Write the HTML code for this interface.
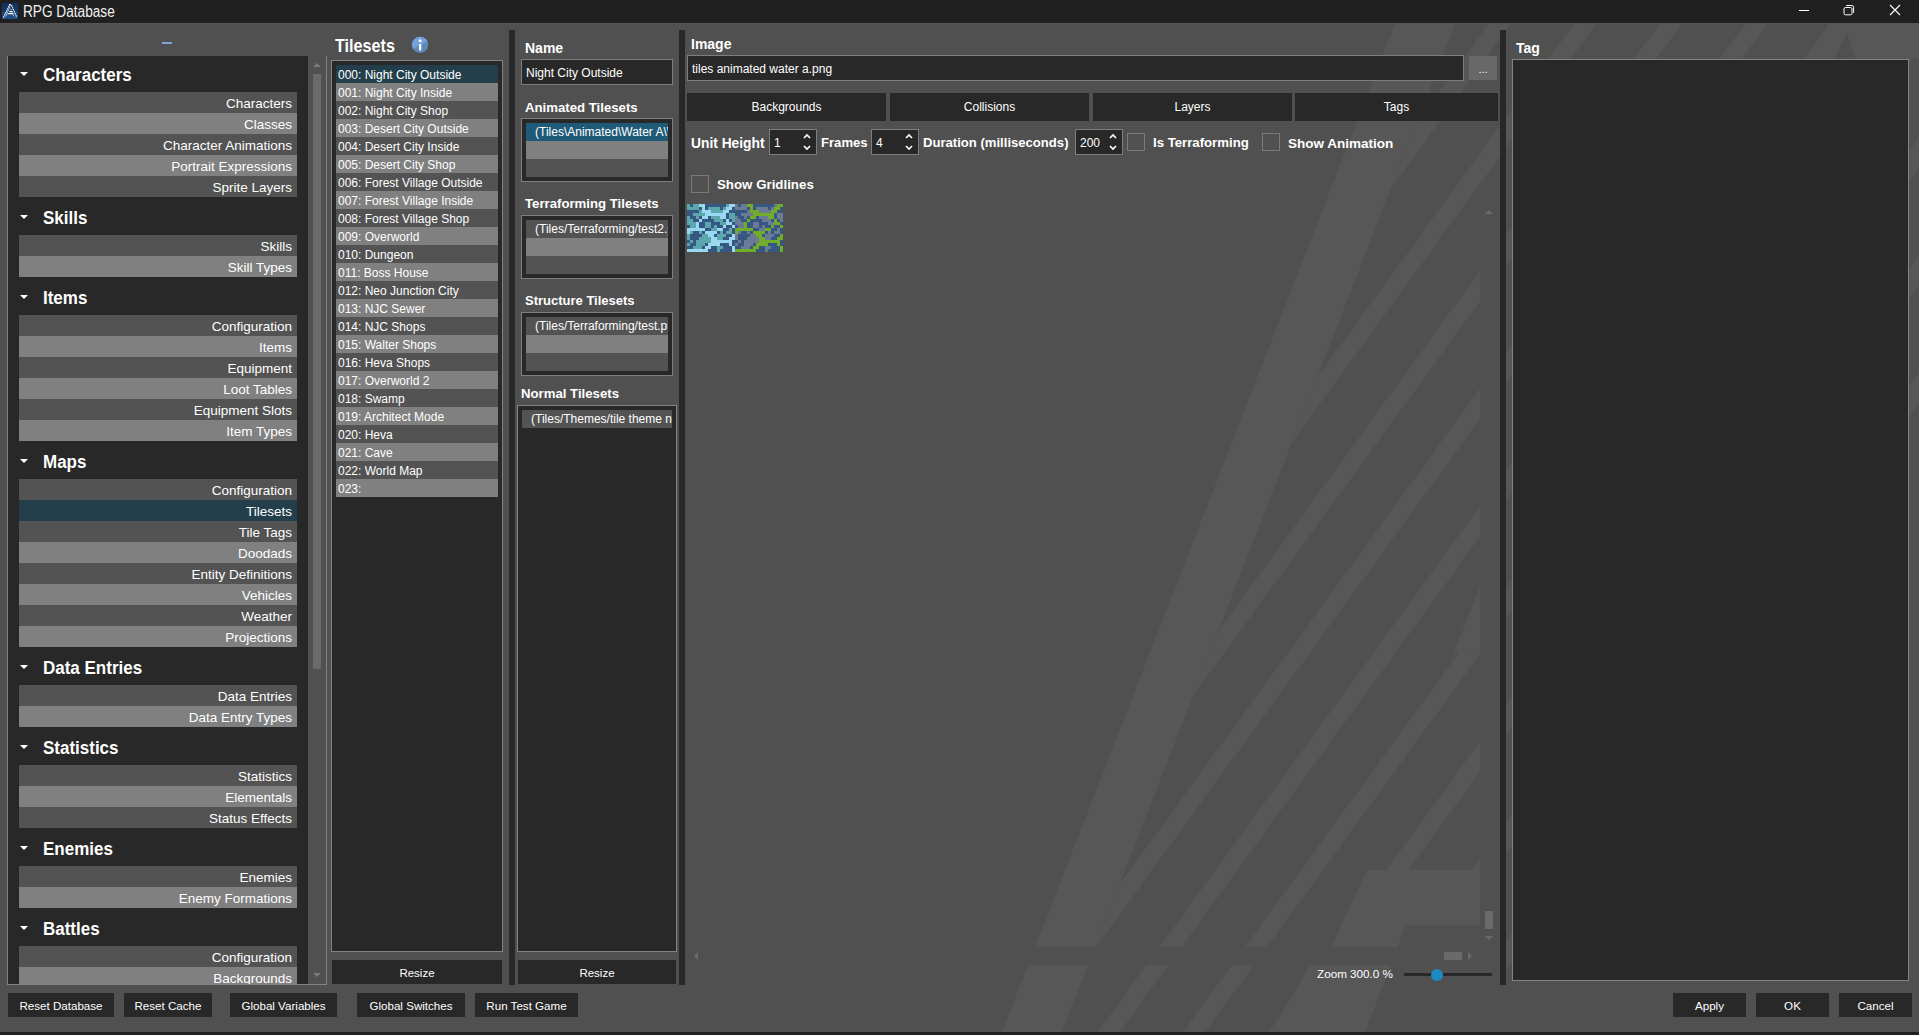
<!DOCTYPE html><html><head><meta charset="utf-8"><style>
html,body{margin:0;padding:0;width:1919px;height:1035px;overflow:hidden;background:#505050;}
.a{position:absolute;box-sizing:border-box;}
.t{position:absolute;white-space:nowrap;font-family:"Liberation Sans",sans-serif;}
</style></head><body>
<svg class="a" style="left:0;top:0" width="1919" height="1035"><polygon points="1395.8,22 1455.8,22 1060.8,1035 1000.8,1035" fill="#575757"/><polygon points="1416.3,123.4 1796.8,-400 1818.8,-400 1390.8,188.7" fill="#575757"/><polygon points="1317.3,377.2 1882.3,-400 1904.3,-400 1291.9,442.4" fill="#575757"/><polygon points="1218.4,630.9 1967.8,-400 1989.8,-400 1192.9,696.1" fill="#575757"/><polygon points="1119.4,884.6 2053.3,-400 2075.3,-400 1094.0,949.9" fill="#575757"/><polygon points="1020.5,1138.3 2138.8,-400 2160.8,-400 995.0,1203.6" fill="#575757"/><polygon points="921.5,1392.0 2224.3,-400 2246.3,-400 896.1,1457.3" fill="#575757"/><polygon points="822.6,1645.7 2309.8,-400 2331.8,-400 797.1,1711.0" fill="#575757"/><polygon points="723.6,1899.4 2395.3,-400 2417.3,-400 698.2,1964.7" fill="#575757"/><polygon points="624.7,2153.1 2480.8,-400 2502.8,-400 599.2,2218.4" fill="#575757"/><polygon points="1480,586.8 1454,652.5 1480,652.5" fill="#575757"/><polygon points="1367,870 1480,870 1480,925 1406,925 1398,947 1331,947" fill="#575757"/><polygon points="1830,22 1919,22 1919,59 1856,59 1847,33 1834,59 1805,59" fill="#575757"/><rect x="1480" y="200" width="20" height="747" fill="#505050"/><polygon points="1406,925 1480,925 1480,947 1398,947" fill="#505050"/><polygon points="1391,947 1500,947 1500,1032 1365,1032 1391,965" fill="#505050"/><polygon points="1310,965 1391,965 1365,1032 1271,1032" fill="#575757"/><rect x="687" y="947" width="813" height="18" fill="#505050"/></svg>
<div class="a" style="left:0px;top:0px;width:1919px;height:23px;background:#202020;"></div>
<div class="a" style="left:0px;top:23px;width:1919px;height:1px;background:#555555;"></div>
<svg class="a" style="left:2px;top:3px" width="16" height="16"><defs><linearGradient id="ig" x1="0" y1="0" x2="0" y2="1"><stop offset="0" stop-color="#12305e"/><stop offset="0.55" stop-color="#163a6c"/><stop offset="0.6" stop-color="#1f4b80"/><stop offset="1" stop-color="#224f85"/></linearGradient></defs><rect width="16" height="16" fill="url(#ig)"/><path d="M1.5 14.5 L7.6 1.6" stroke="#fff" stroke-width="1.2" stroke-dasharray="1.3 0.9" fill="none"/><path d="M3.8 13.6 L8.3 2.4" stroke="#dfe6f0" stroke-width="0.8" fill="none"/><path d="M7.5 1.8 Q9.6 1.2 9.8 3 L14.6 14" stroke="#fff" stroke-width="1.2" stroke-dasharray="1.4 0.8" fill="none"/><path d="M11.6 12.6 L8.6 5.4" stroke="#fff" stroke-width="1" stroke-dasharray="1.2 0.8" fill="none"/><path d="M6.2 10.6 H11.2 M7.4 8.6 H10.4" stroke="#fff" stroke-width="1.1" fill="none"/></svg>
<div class="t" style="left:23px;top:2.88px;font-size:15.6px;line-height:17.43px;font-weight:normal;color:#f0f0f0;transform:scaleX(0.875);transform-origin:0 0;">RPG Database</div>
<div class="a" style="left:1799px;top:10px;width:10px;height:1px;background:#ffffff;"></div>
<svg class="a" style="left:1842px;top:4px" width="14" height="13"><rect x="2" y="3.5" width="8" height="7.3" rx="1.5" fill="none" stroke="#fff" stroke-width="1"/><path d="M4.2 1.5 H9.8 Q11.6 1.5 11.6 3.3 V8.8" fill="none" stroke="#fff" stroke-width="1"/></svg>
<svg class="a" style="left:1889px;top:4px" width="12" height="12"><path d="M1 1 L11 11 M11 1 L1 11" stroke="#fff" stroke-width="1.1"/></svg>
<div class="a" style="left:162px;top:42px;width:10px;height:2px;background:#7aa6d9;"></div>
<div class="a" style="left:7px;top:56px;width:320px;height:929px;border-left:1px solid #838383;border-right:1px solid #838383;border-bottom:1px solid #838383;"></div>
<div class="a" style="left:8px;top:56px;width:300px;height:928px;background:#282828;"></div>
<svg class="a" style="left:312px;top:62px" width="10" height="6"><path d="M1 5 L5 1 L9 5 Z" fill="#7a7a7a"/></svg>
<div class="a" style="left:313px;top:74px;width:8px;height:595px;background:#6a6a6a;"></div>
<svg class="a" style="left:312px;top:972px" width="10" height="6"><path d="M1 1 L5 5 L9 1 Z" fill="#7a7a7a"/></svg>
<div class="a" style="left:8px;top:56px;width:300px;height:928px;overflow:hidden">
<svg class="a" style="left:11px;top:15px" width="10" height="6"><path d="M1 1 L9 1 L5 5 Z" fill="#fff"/></svg>
<div class="t" style="left:35px;top:7.62px;font-size:19.2px;line-height:21.45px;font-weight:bold;color:#fff;transform:scaleX(0.885);transform-origin:0 0;">Characters</div>
<div class="a" style="left:11px;top:36px;width:278px;height:21px;background:#535353"></div>
<div class="t" style="right:16px;top:39.58px;font-size:13.5px;line-height:15.08px;font-weight:normal;color:#fff;text-align:right;">Characters</div>
<div class="a" style="left:11px;top:57px;width:278px;height:21px;background:#808080"></div>
<div class="t" style="right:16px;top:60.58px;font-size:13.5px;line-height:15.08px;font-weight:normal;color:#fff;text-align:right;">Classes</div>
<div class="a" style="left:11px;top:78px;width:278px;height:21px;background:#535353"></div>
<div class="t" style="right:16px;top:81.58px;font-size:13.5px;line-height:15.08px;font-weight:normal;color:#fff;text-align:right;">Character Animations</div>
<div class="a" style="left:11px;top:99px;width:278px;height:21px;background:#808080"></div>
<div class="t" style="right:16px;top:102.58px;font-size:13.5px;line-height:15.08px;font-weight:normal;color:#fff;text-align:right;">Portrait Expressions</div>
<div class="a" style="left:11px;top:120px;width:278px;height:21px;background:#535353"></div>
<div class="t" style="right:16px;top:123.58px;font-size:13.5px;line-height:15.08px;font-weight:normal;color:#fff;text-align:right;">Sprite Layers</div>
<svg class="a" style="left:11px;top:158px" width="10" height="6"><path d="M1 1 L9 1 L5 5 Z" fill="#fff"/></svg>
<div class="t" style="left:35px;top:150.62px;font-size:19.2px;line-height:21.45px;font-weight:bold;color:#fff;transform:scaleX(0.885);transform-origin:0 0;">Skills</div>
<div class="a" style="left:11px;top:179px;width:278px;height:21px;background:#535353"></div>
<div class="t" style="right:16px;top:182.58px;font-size:13.5px;line-height:15.08px;font-weight:normal;color:#fff;text-align:right;">Skills</div>
<div class="a" style="left:11px;top:200px;width:278px;height:21px;background:#808080"></div>
<div class="t" style="right:16px;top:203.58px;font-size:13.5px;line-height:15.08px;font-weight:normal;color:#fff;text-align:right;">Skill Types</div>
<svg class="a" style="left:11px;top:238px" width="10" height="6"><path d="M1 1 L9 1 L5 5 Z" fill="#fff"/></svg>
<div class="t" style="left:35px;top:230.62px;font-size:19.2px;line-height:21.45px;font-weight:bold;color:#fff;transform:scaleX(0.885);transform-origin:0 0;">Items</div>
<div class="a" style="left:11px;top:259px;width:278px;height:21px;background:#535353"></div>
<div class="t" style="right:16px;top:262.58px;font-size:13.5px;line-height:15.08px;font-weight:normal;color:#fff;text-align:right;">Configuration</div>
<div class="a" style="left:11px;top:280px;width:278px;height:21px;background:#808080"></div>
<div class="t" style="right:16px;top:283.58px;font-size:13.5px;line-height:15.08px;font-weight:normal;color:#fff;text-align:right;">Items</div>
<div class="a" style="left:11px;top:301px;width:278px;height:21px;background:#535353"></div>
<div class="t" style="right:16px;top:304.58px;font-size:13.5px;line-height:15.08px;font-weight:normal;color:#fff;text-align:right;">Equipment</div>
<div class="a" style="left:11px;top:322px;width:278px;height:21px;background:#808080"></div>
<div class="t" style="right:16px;top:325.58px;font-size:13.5px;line-height:15.08px;font-weight:normal;color:#fff;text-align:right;">Loot Tables</div>
<div class="a" style="left:11px;top:343px;width:278px;height:21px;background:#535353"></div>
<div class="t" style="right:16px;top:346.58px;font-size:13.5px;line-height:15.08px;font-weight:normal;color:#fff;text-align:right;">Equipment Slots</div>
<div class="a" style="left:11px;top:364px;width:278px;height:21px;background:#808080"></div>
<div class="t" style="right:16px;top:367.58px;font-size:13.5px;line-height:15.08px;font-weight:normal;color:#fff;text-align:right;">Item Types</div>
<svg class="a" style="left:11px;top:402px" width="10" height="6"><path d="M1 1 L9 1 L5 5 Z" fill="#fff"/></svg>
<div class="t" style="left:35px;top:394.62px;font-size:19.2px;line-height:21.45px;font-weight:bold;color:#fff;transform:scaleX(0.885);transform-origin:0 0;">Maps</div>
<div class="a" style="left:11px;top:423px;width:278px;height:21px;background:#535353"></div>
<div class="t" style="right:16px;top:426.58px;font-size:13.5px;line-height:15.08px;font-weight:normal;color:#fff;text-align:right;">Configuration</div>
<div class="a" style="left:11px;top:444px;width:278px;height:21px;background:#243f4c"></div>
<div class="t" style="right:16px;top:447.58px;font-size:13.5px;line-height:15.08px;font-weight:normal;color:#fff;text-align:right;">Tilesets</div>
<div class="a" style="left:11px;top:465px;width:278px;height:21px;background:#535353"></div>
<div class="t" style="right:16px;top:468.58px;font-size:13.5px;line-height:15.08px;font-weight:normal;color:#fff;text-align:right;">Tile Tags</div>
<div class="a" style="left:11px;top:486px;width:278px;height:21px;background:#808080"></div>
<div class="t" style="right:16px;top:489.58px;font-size:13.5px;line-height:15.08px;font-weight:normal;color:#fff;text-align:right;">Doodads</div>
<div class="a" style="left:11px;top:507px;width:278px;height:21px;background:#535353"></div>
<div class="t" style="right:16px;top:510.58px;font-size:13.5px;line-height:15.08px;font-weight:normal;color:#fff;text-align:right;">Entity Definitions</div>
<div class="a" style="left:11px;top:528px;width:278px;height:21px;background:#808080"></div>
<div class="t" style="right:16px;top:531.58px;font-size:13.5px;line-height:15.08px;font-weight:normal;color:#fff;text-align:right;">Vehicles</div>
<div class="a" style="left:11px;top:549px;width:278px;height:21px;background:#535353"></div>
<div class="t" style="right:16px;top:552.58px;font-size:13.5px;line-height:15.08px;font-weight:normal;color:#fff;text-align:right;">Weather</div>
<div class="a" style="left:11px;top:570px;width:278px;height:21px;background:#808080"></div>
<div class="t" style="right:16px;top:573.58px;font-size:13.5px;line-height:15.08px;font-weight:normal;color:#fff;text-align:right;">Projections</div>
<svg class="a" style="left:11px;top:608px" width="10" height="6"><path d="M1 1 L9 1 L5 5 Z" fill="#fff"/></svg>
<div class="t" style="left:35px;top:600.62px;font-size:19.2px;line-height:21.45px;font-weight:bold;color:#fff;transform:scaleX(0.885);transform-origin:0 0;">Data Entries</div>
<div class="a" style="left:11px;top:629px;width:278px;height:21px;background:#535353"></div>
<div class="t" style="right:16px;top:632.58px;font-size:13.5px;line-height:15.08px;font-weight:normal;color:#fff;text-align:right;">Data Entries</div>
<div class="a" style="left:11px;top:650px;width:278px;height:21px;background:#808080"></div>
<div class="t" style="right:16px;top:653.58px;font-size:13.5px;line-height:15.08px;font-weight:normal;color:#fff;text-align:right;">Data Entry Types</div>
<svg class="a" style="left:11px;top:688px" width="10" height="6"><path d="M1 1 L9 1 L5 5 Z" fill="#fff"/></svg>
<div class="t" style="left:35px;top:680.62px;font-size:19.2px;line-height:21.45px;font-weight:bold;color:#fff;transform:scaleX(0.885);transform-origin:0 0;">Statistics</div>
<div class="a" style="left:11px;top:709px;width:278px;height:21px;background:#535353"></div>
<div class="t" style="right:16px;top:712.58px;font-size:13.5px;line-height:15.08px;font-weight:normal;color:#fff;text-align:right;">Statistics</div>
<div class="a" style="left:11px;top:730px;width:278px;height:21px;background:#808080"></div>
<div class="t" style="right:16px;top:733.58px;font-size:13.5px;line-height:15.08px;font-weight:normal;color:#fff;text-align:right;">Elementals</div>
<div class="a" style="left:11px;top:751px;width:278px;height:21px;background:#535353"></div>
<div class="t" style="right:16px;top:754.58px;font-size:13.5px;line-height:15.08px;font-weight:normal;color:#fff;text-align:right;">Status Effects</div>
<svg class="a" style="left:11px;top:789px" width="10" height="6"><path d="M1 1 L9 1 L5 5 Z" fill="#fff"/></svg>
<div class="t" style="left:35px;top:781.62px;font-size:19.2px;line-height:21.45px;font-weight:bold;color:#fff;transform:scaleX(0.885);transform-origin:0 0;">Enemies</div>
<div class="a" style="left:11px;top:810px;width:278px;height:21px;background:#535353"></div>
<div class="t" style="right:16px;top:813.58px;font-size:13.5px;line-height:15.08px;font-weight:normal;color:#fff;text-align:right;">Enemies</div>
<div class="a" style="left:11px;top:831px;width:278px;height:21px;background:#808080"></div>
<div class="t" style="right:16px;top:834.58px;font-size:13.5px;line-height:15.08px;font-weight:normal;color:#fff;text-align:right;">Enemy Formations</div>
<svg class="a" style="left:11px;top:869px" width="10" height="6"><path d="M1 1 L9 1 L5 5 Z" fill="#fff"/></svg>
<div class="t" style="left:35px;top:861.62px;font-size:19.2px;line-height:21.45px;font-weight:bold;color:#fff;transform:scaleX(0.885);transform-origin:0 0;">Battles</div>
<div class="a" style="left:11px;top:890px;width:278px;height:21px;background:#535353"></div>
<div class="t" style="right:16px;top:893.58px;font-size:13.5px;line-height:15.08px;font-weight:normal;color:#fff;text-align:right;">Configuration</div>
<div class="a" style="left:11px;top:911px;width:278px;height:21px;background:#808080"></div>
<div class="t" style="right:16px;top:914.58px;font-size:13.5px;line-height:15.08px;font-weight:normal;color:#fff;text-align:right;">Backgrounds</div>
</div>
<div class="t" style="left:335px;top:36.03px;font-size:18.2px;line-height:20.33px;font-weight:bold;color:#fff;transform:scaleX(0.89);transform-origin:0 0;">Tilesets</div>
<svg class="a" style="left:411px;top:36px" width="18" height="18"><defs><clipPath id="ic"><circle cx="9.1" cy="8.8" r="8.1"/></clipPath></defs><g clip-path="url(#ic)"><rect width="18" height="18" fill="#5f87ba"/><polygon points="0,0 18,0 18,4.5 0,14" fill="#71a1dc"/></g><circle cx="9.1" cy="4.8" r="1.5" fill="#fff8f0"/><rect x="8" y="8" width="2.3" height="6.4" fill="#fff8f0"/></svg>
<div class="a" style="left:331px;top:60px;width:172px;height:892px;background:#282828;border:1px solid #838383;"></div>
<div class="a" style="left:336px;top:65px;width:162px;height:18px;background:#243f4c;"></div>
<div class="t" style="left:338px;top:68.54px;font-size:12px;line-height:13.40px;font-weight:normal;color:#fff;">000: Night City Outside</div>
<div class="a" style="left:336px;top:83px;width:162px;height:18px;background:#808080;"></div>
<div class="t" style="left:338px;top:86.54px;font-size:12px;line-height:13.40px;font-weight:normal;color:#fff;">001: Night City Inside</div>
<div class="a" style="left:336px;top:101px;width:162px;height:18px;background:#535353;"></div>
<div class="t" style="left:338px;top:104.54px;font-size:12px;line-height:13.40px;font-weight:normal;color:#fff;">002: Night City Shop</div>
<div class="a" style="left:336px;top:119px;width:162px;height:18px;background:#808080;"></div>
<div class="t" style="left:338px;top:122.54px;font-size:12px;line-height:13.40px;font-weight:normal;color:#fff;">003: Desert City Outside</div>
<div class="a" style="left:336px;top:137px;width:162px;height:18px;background:#535353;"></div>
<div class="t" style="left:338px;top:140.54px;font-size:12px;line-height:13.40px;font-weight:normal;color:#fff;">004: Desert City Inside</div>
<div class="a" style="left:336px;top:155px;width:162px;height:18px;background:#808080;"></div>
<div class="t" style="left:338px;top:158.54px;font-size:12px;line-height:13.40px;font-weight:normal;color:#fff;">005: Desert City Shop</div>
<div class="a" style="left:336px;top:173px;width:162px;height:18px;background:#535353;"></div>
<div class="t" style="left:338px;top:176.54px;font-size:12px;line-height:13.40px;font-weight:normal;color:#fff;">006: Forest Village Outside</div>
<div class="a" style="left:336px;top:191px;width:162px;height:18px;background:#808080;"></div>
<div class="t" style="left:338px;top:194.54px;font-size:12px;line-height:13.40px;font-weight:normal;color:#fff;">007: Forest Village Inside</div>
<div class="a" style="left:336px;top:209px;width:162px;height:18px;background:#535353;"></div>
<div class="t" style="left:338px;top:212.54px;font-size:12px;line-height:13.40px;font-weight:normal;color:#fff;">008: Forest Village Shop</div>
<div class="a" style="left:336px;top:227px;width:162px;height:18px;background:#808080;"></div>
<div class="t" style="left:338px;top:230.54px;font-size:12px;line-height:13.40px;font-weight:normal;color:#fff;">009: Overworld</div>
<div class="a" style="left:336px;top:245px;width:162px;height:18px;background:#535353;"></div>
<div class="t" style="left:338px;top:248.54px;font-size:12px;line-height:13.40px;font-weight:normal;color:#fff;">010: Dungeon</div>
<div class="a" style="left:336px;top:263px;width:162px;height:18px;background:#808080;"></div>
<div class="t" style="left:338px;top:266.54px;font-size:12px;line-height:13.40px;font-weight:normal;color:#fff;">011: Boss House</div>
<div class="a" style="left:336px;top:281px;width:162px;height:18px;background:#535353;"></div>
<div class="t" style="left:338px;top:284.54px;font-size:12px;line-height:13.40px;font-weight:normal;color:#fff;">012: Neo Junction City</div>
<div class="a" style="left:336px;top:299px;width:162px;height:18px;background:#808080;"></div>
<div class="t" style="left:338px;top:302.54px;font-size:12px;line-height:13.40px;font-weight:normal;color:#fff;">013: NJC Sewer</div>
<div class="a" style="left:336px;top:317px;width:162px;height:18px;background:#535353;"></div>
<div class="t" style="left:338px;top:320.54px;font-size:12px;line-height:13.40px;font-weight:normal;color:#fff;">014: NJC Shops</div>
<div class="a" style="left:336px;top:335px;width:162px;height:18px;background:#808080;"></div>
<div class="t" style="left:338px;top:338.54px;font-size:12px;line-height:13.40px;font-weight:normal;color:#fff;">015: Walter Shops</div>
<div class="a" style="left:336px;top:353px;width:162px;height:18px;background:#535353;"></div>
<div class="t" style="left:338px;top:356.54px;font-size:12px;line-height:13.40px;font-weight:normal;color:#fff;">016: Heva Shops</div>
<div class="a" style="left:336px;top:371px;width:162px;height:18px;background:#808080;"></div>
<div class="t" style="left:338px;top:374.54px;font-size:12px;line-height:13.40px;font-weight:normal;color:#fff;">017: Overworld 2</div>
<div class="a" style="left:336px;top:389px;width:162px;height:18px;background:#535353;"></div>
<div class="t" style="left:338px;top:392.54px;font-size:12px;line-height:13.40px;font-weight:normal;color:#fff;">018: Swamp</div>
<div class="a" style="left:336px;top:407px;width:162px;height:18px;background:#808080;"></div>
<div class="t" style="left:338px;top:410.54px;font-size:12px;line-height:13.40px;font-weight:normal;color:#fff;">019: Architect Mode</div>
<div class="a" style="left:336px;top:425px;width:162px;height:18px;background:#535353;"></div>
<div class="t" style="left:338px;top:428.54px;font-size:12px;line-height:13.40px;font-weight:normal;color:#fff;">020: Heva</div>
<div class="a" style="left:336px;top:443px;width:162px;height:18px;background:#808080;"></div>
<div class="t" style="left:338px;top:446.54px;font-size:12px;line-height:13.40px;font-weight:normal;color:#fff;">021: Cave</div>
<div class="a" style="left:336px;top:461px;width:162px;height:18px;background:#535353;"></div>
<div class="t" style="left:338px;top:464.54px;font-size:12px;line-height:13.40px;font-weight:normal;color:#fff;">022: World Map</div>
<div class="a" style="left:336px;top:479px;width:162px;height:18px;background:#808080;"></div>
<div class="t" style="left:338px;top:482.54px;font-size:12px;line-height:13.40px;font-weight:normal;color:#fff;">023: </div>
<div class="a" style="left:332px;top:960px;width:170px;height:24px;background:#282828;"></div>
<div class="t" style="left:217px;width:400px;text-align:center;top:967.09px;font-size:11.5px;line-height:12.85px;font-weight:normal;color:#fff;">Resize</div>
<div class="a" style="left:509px;top:30px;width:6px;height:955px;background:#282828;"></div>
<div class="a" style="left:679px;top:30px;width:6px;height:955px;background:#282828;"></div>
<div class="a" style="left:1500px;top:30px;width:6px;height:955px;background:#282828;"></div>
<div class="t" style="left:525px;top:40.53px;font-size:14px;line-height:15.64px;font-weight:bold;color:#fff;">Name</div>
<div class="a" style="left:521px;top:59px;width:152px;height:26px;background:#282828;border:1px solid #7e7e7e;"></div>
<div class="t" style="left:526px;top:67.14px;font-size:12px;line-height:13.40px;font-weight:normal;color:#fff;">Night City Outside</div>
<div class="t" style="left:525px;top:100.65px;font-size:13.2px;line-height:14.74px;font-weight:bold;color:#fff;">Animated Tilesets</div>
<div class="a" style="left:521px;top:118px;width:152px;height:64px;background:#282828;border:1px solid #7e7e7e;"></div>
<div class="a" style="left:526px;top:123px;width:142px;height:18px;background:#1f5a78;"></div>
<div class="a" style="left:526px;top:141px;width:142px;height:18px;background:#808080;"></div>
<div class="a" style="left:526px;top:159px;width:142px;height:18px;background:#535353;"></div>
<div class="a" style="left:526px;top:123px;width:142px;height:18px;overflow:hidden">
<div class="t" style="left:9px;top:3.44px;font-size:12px;line-height:13.40px;font-weight:normal;color:#fff;">(Tiles\Animated\Water A\Water B</div>
</div>
<div class="t" style="left:525px;top:197.25px;font-size:13.2px;line-height:14.74px;font-weight:bold;color:#fff;">Terraforming Tilesets</div>
<div class="a" style="left:521px;top:215px;width:152px;height:64px;background:#282828;border:1px solid #7e7e7e;"></div>
<div class="a" style="left:526px;top:220px;width:142px;height:18px;background:#535353;"></div>
<div class="a" style="left:526px;top:238px;width:142px;height:18px;background:#808080;"></div>
<div class="a" style="left:526px;top:256px;width:142px;height:18px;background:#535353;"></div>
<div class="a" style="left:526px;top:220px;width:142px;height:18px;overflow:hidden">
<div class="t" style="left:9px;top:3.44px;font-size:12px;line-height:13.40px;font-weight:normal;color:#fff;">(Tiles/Terraforming/test2.png)</div>
</div>
<div class="t" style="left:525px;top:294.44px;font-size:13.0px;line-height:14.52px;font-weight:bold;color:#fff;">Structure Tilesets</div>
<div class="a" style="left:521px;top:312px;width:152px;height:64px;background:#282828;border:1px solid #7e7e7e;"></div>
<div class="a" style="left:526px;top:317px;width:142px;height:18px;background:#535353;"></div>
<div class="a" style="left:526px;top:335px;width:142px;height:18px;background:#808080;"></div>
<div class="a" style="left:526px;top:353px;width:142px;height:18px;background:#535353;"></div>
<div class="a" style="left:526px;top:317px;width:142px;height:18px;overflow:hidden">
<div class="t" style="left:9px;top:3.44px;font-size:12px;line-height:13.40px;font-weight:normal;color:#fff;">(Tiles/Terraforming/test.png)</div>
</div>
<div class="t" style="left:521px;top:387.25px;font-size:13.2px;line-height:14.74px;font-weight:bold;color:#fff;">Normal Tilesets</div>
<div class="a" style="left:517px;top:405px;width:160px;height:547px;background:#282828;border:1px solid #838383;"></div>
<div class="a" style="left:522px;top:410px;width:150px;height:18px;background:#535353;"></div>
<div class="a" style="left:522px;top:410px;width:150px;height:18px;overflow:hidden">
<div class="t" style="left:9px;top:3.44px;font-size:12px;line-height:13.40px;font-weight:normal;color:#fff;">(Tiles/Themes/tile theme night city.png)</div>
</div>
<div class="a" style="left:518px;top:960px;width:158px;height:24px;background:#282828;"></div>
<div class="t" style="left:397px;width:400px;text-align:center;top:967.09px;font-size:11.5px;line-height:12.85px;font-weight:normal;color:#fff;">Resize</div>
<div class="t" style="left:691px;top:37.03px;font-size:14px;line-height:15.64px;font-weight:bold;color:#fff;">Image</div>
<div class="a" style="left:687px;top:55px;width:777px;height:26px;background:#282828;border:1px solid #7e7e7e;"></div>
<div class="t" style="left:692px;top:63.34px;font-size:12px;line-height:13.40px;font-weight:normal;color:#fff;">tiles animated water a.png</div>
<div class="a" style="left:1469px;top:56px;width:28px;height:24px;background:#686868;"></div>
<div class="t" style="left:1283px;width:400px;text-align:center;top:63.05px;font-size:11px;line-height:12.29px;font-weight:normal;color:#fff;">...</div>
<div class="a" style="left:687px;top:93px;width:199px;height:28px;background:#282828;"></div>
<div class="t" style="left:586.5px;width:400px;text-align:center;top:101.44px;font-size:12px;line-height:13.40px;font-weight:normal;color:#fff;">Backgrounds</div>
<div class="a" style="left:890px;top:93px;width:199px;height:28px;background:#282828;"></div>
<div class="t" style="left:789.5px;width:400px;text-align:center;top:101.44px;font-size:12px;line-height:13.40px;font-weight:normal;color:#fff;">Collisions</div>
<div class="a" style="left:1093px;top:93px;width:199px;height:28px;background:#282828;"></div>
<div class="t" style="left:992.5px;width:400px;text-align:center;top:101.44px;font-size:12px;line-height:13.40px;font-weight:normal;color:#fff;">Layers</div>
<div class="a" style="left:1295px;top:93px;width:203px;height:28px;background:#282828;"></div>
<div class="t" style="left:1196.5px;width:400px;text-align:center;top:101.44px;font-size:12px;line-height:13.40px;font-weight:normal;color:#fff;">Tags</div>
<div class="t" style="left:691px;top:135.81px;font-size:13.8px;line-height:15.41px;font-weight:bold;color:#fff;">Unit Height</div>
<div class="a" style="left:769px;top:129px;width:48px;height:26px;background:#282828;border:1px solid #7e7e7e;"></div>
<div class="t" style="left:774px;top:136.64px;font-size:12px;line-height:13.40px;font-weight:normal;color:#fff;">1</div>
<svg class="a" style="left:802px;top:131px" width="10" height="22"><path d="M2 7 L5 4 L8 7 M2 15 L5 18 L8 15" stroke="#fff" stroke-width="1.7" fill="none"/></svg>
<div class="t" style="left:821px;top:136.44px;font-size:13.1px;line-height:14.63px;font-weight:bold;color:#fff;">Frames</div>
<div class="a" style="left:871px;top:129px;width:48px;height:26px;background:#282828;border:1px solid #7e7e7e;"></div>
<div class="t" style="left:876px;top:136.64px;font-size:12px;line-height:13.40px;font-weight:normal;color:#fff;">4</div>
<svg class="a" style="left:904px;top:131px" width="10" height="22"><path d="M2 7 L5 4 L8 7 M2 15 L5 18 L8 15" stroke="#fff" stroke-width="1.7" fill="none"/></svg>
<div class="t" style="left:923px;top:136.44px;font-size:13.1px;line-height:14.63px;font-weight:bold;color:#fff;">Duration (milliseconds)</div>
<div class="a" style="left:1075px;top:129px;width:48px;height:26px;background:#282828;border:1px solid #7e7e7e;"></div>
<div class="t" style="left:1080px;top:136.64px;font-size:12px;line-height:13.40px;font-weight:normal;color:#fff;">200</div>
<svg class="a" style="left:1108px;top:131px" width="10" height="22"><path d="M2 7 L5 4 L8 7 M2 15 L5 18 L8 15" stroke="#fff" stroke-width="1.7" fill="none"/></svg>
<div class="a" style="left:1127px;top:133px;width:18px;height:18px;border:1px solid #7a7a7a;"></div>
<div class="t" style="left:1153px;top:136.35px;font-size:13.2px;line-height:14.74px;font-weight:bold;color:#fff;">Is Terraforming</div>
<div class="a" style="left:1262px;top:133px;width:18px;height:18px;border:1px solid #7a7a7a;"></div>
<div class="t" style="left:1288px;top:136.08px;font-size:13.5px;line-height:15.08px;font-weight:bold;color:#fff;">Show Animation</div>
<div class="a" style="left:691px;top:175px;width:18px;height:18px;border:1px solid #7a7a7a;"></div>
<div class="t" style="left:717px;top:178.46px;font-size:13.3px;line-height:14.86px;font-weight:bold;color:#fff;">Show Gridlines</div>
<svg class="a" style="left:687px;top:204px" width="48" height="48" shape-rendering="crispEdges"><rect x="0" y="0" width="3" height="3" fill="#5ba7ae"/><rect x="3" y="0" width="3" height="3" fill="#365782"/><rect x="6" y="0" width="6" height="3" fill="#5ba7ae"/><rect x="12" y="0" width="6" height="3" fill="#9ad8f0"/><rect x="18" y="0" width="21" height="3" fill="#365782"/><rect x="39" y="0" width="3" height="3" fill="#5ba7ae"/><rect x="42" y="0" width="6" height="3" fill="#9ad8f0"/><rect x="0" y="3" width="12" height="3" fill="#5ba7ae"/><rect x="12" y="3" width="3" height="3" fill="#365782"/><rect x="15" y="3" width="3" height="3" fill="#9ad8f0"/><rect x="18" y="3" width="3" height="3" fill="#365782"/><rect x="21" y="3" width="12" height="3" fill="#5ba7ae"/><rect x="33" y="3" width="3" height="3" fill="#365782"/><rect x="36" y="3" width="3" height="3" fill="#5ba7ae"/><rect x="39" y="3" width="6" height="3" fill="#9ad8f0"/><rect x="45" y="3" width="3" height="3" fill="#365782"/><rect x="0" y="6" width="12" height="3" fill="#365782"/><rect x="12" y="6" width="3" height="3" fill="#5ba7ae"/><rect x="15" y="6" width="9" height="3" fill="#9ad8f0"/><rect x="24" y="6" width="12" height="3" fill="#5ba7ae"/><rect x="36" y="6" width="6" height="3" fill="#9ad8f0"/><rect x="42" y="6" width="6" height="3" fill="#365782"/><rect x="0" y="9" width="6" height="3" fill="#365782"/><rect x="6" y="9" width="12" height="3" fill="#5ba7ae"/><rect x="18" y="9" width="21" height="3" fill="#9ad8f0"/><rect x="39" y="9" width="3" height="3" fill="#365782"/><rect x="42" y="9" width="6" height="3" fill="#5ba7ae"/><rect x="0" y="12" width="3" height="3" fill="#5ba7ae"/><rect x="3" y="12" width="6" height="3" fill="#365782"/><rect x="9" y="12" width="3" height="3" fill="#5ba7ae"/><rect x="12" y="12" width="3" height="3" fill="#365782"/><rect x="15" y="12" width="6" height="3" fill="#9ad8f0"/><rect x="21" y="12" width="3" height="3" fill="#365782"/><rect x="24" y="12" width="9" height="3" fill="#5ba7ae"/><rect x="33" y="12" width="6" height="3" fill="#9ad8f0"/><rect x="39" y="12" width="3" height="3" fill="#365782"/><rect x="42" y="12" width="6" height="3" fill="#5ba7ae"/><rect x="0" y="15" width="6" height="3" fill="#5ba7ae"/><rect x="6" y="15" width="6" height="3" fill="#365782"/><rect x="12" y="15" width="3" height="3" fill="#9ad8f0"/><rect x="15" y="15" width="12" height="3" fill="#365782"/><rect x="27" y="15" width="9" height="3" fill="#5ba7ae"/><rect x="36" y="15" width="3" height="3" fill="#365782"/><rect x="39" y="15" width="3" height="3" fill="#9ad8f0"/><rect x="42" y="15" width="3" height="3" fill="#365782"/><rect x="45" y="15" width="3" height="3" fill="#5ba7ae"/><rect x="0" y="18" width="9" height="3" fill="#5ba7ae"/><rect x="9" y="18" width="3" height="3" fill="#9ad8f0"/><rect x="12" y="18" width="6" height="3" fill="#365782"/><rect x="18" y="18" width="6" height="3" fill="#5ba7ae"/><rect x="24" y="18" width="9" height="3" fill="#365782"/><rect x="33" y="18" width="6" height="3" fill="#5ba7ae"/><rect x="39" y="18" width="6" height="3" fill="#9ad8f0"/><rect x="45" y="18" width="3" height="3" fill="#365782"/><rect x="0" y="21" width="3" height="3" fill="#365782"/><rect x="3" y="21" width="6" height="3" fill="#5ba7ae"/><rect x="9" y="21" width="3" height="3" fill="#9ad8f0"/><rect x="12" y="21" width="6" height="3" fill="#365782"/><rect x="18" y="21" width="6" height="3" fill="#5ba7ae"/><rect x="24" y="21" width="3" height="3" fill="#365782"/><rect x="27" y="21" width="3" height="3" fill="#5ba7ae"/><rect x="30" y="21" width="6" height="3" fill="#365782"/><rect x="36" y="21" width="3" height="3" fill="#9ad8f0"/><rect x="39" y="21" width="6" height="3" fill="#365782"/><rect x="45" y="21" width="3" height="3" fill="#9ad8f0"/><rect x="0" y="24" width="18" height="3" fill="#9ad8f0"/><rect x="18" y="24" width="6" height="3" fill="#365782"/><rect x="24" y="24" width="6" height="3" fill="#5ba7ae"/><rect x="30" y="24" width="6" height="3" fill="#9ad8f0"/><rect x="36" y="24" width="6" height="3" fill="#365782"/><rect x="42" y="24" width="3" height="3" fill="#5ba7ae"/><rect x="45" y="24" width="3" height="3" fill="#365782"/><rect x="0" y="27" width="3" height="3" fill="#9ad8f0"/><rect x="3" y="27" width="3" height="3" fill="#5ba7ae"/><rect x="6" y="27" width="6" height="3" fill="#365782"/><rect x="12" y="27" width="3" height="3" fill="#5ba7ae"/><rect x="15" y="27" width="3" height="3" fill="#365782"/><rect x="18" y="27" width="12" height="3" fill="#9ad8f0"/><rect x="30" y="27" width="3" height="3" fill="#365782"/><rect x="33" y="27" width="3" height="3" fill="#5ba7ae"/><rect x="36" y="27" width="3" height="3" fill="#365782"/><rect x="39" y="27" width="6" height="3" fill="#5ba7ae"/><rect x="45" y="27" width="3" height="3" fill="#365782"/><rect x="0" y="30" width="3" height="3" fill="#5ba7ae"/><rect x="3" y="30" width="12" height="3" fill="#365782"/><rect x="15" y="30" width="6" height="3" fill="#5ba7ae"/><rect x="21" y="30" width="6" height="3" fill="#9ad8f0"/><rect x="27" y="30" width="3" height="3" fill="#365782"/><rect x="30" y="30" width="9" height="3" fill="#5ba7ae"/><rect x="39" y="30" width="6" height="3" fill="#365782"/><rect x="45" y="30" width="3" height="3" fill="#9ad8f0"/><rect x="0" y="33" width="3" height="3" fill="#5ba7ae"/><rect x="3" y="33" width="9" height="3" fill="#365782"/><rect x="12" y="33" width="12" height="3" fill="#5ba7ae"/><rect x="24" y="33" width="6" height="3" fill="#9ad8f0"/><rect x="30" y="33" width="6" height="3" fill="#5ba7ae"/><rect x="36" y="33" width="6" height="3" fill="#365782"/><rect x="42" y="33" width="6" height="3" fill="#9ad8f0"/><rect x="0" y="36" width="3" height="3" fill="#365782"/><rect x="3" y="36" width="3" height="3" fill="#5ba7ae"/><rect x="6" y="36" width="3" height="3" fill="#365782"/><rect x="9" y="36" width="15" height="3" fill="#5ba7ae"/><rect x="24" y="36" width="21" height="3" fill="#9ad8f0"/><rect x="45" y="36" width="3" height="3" fill="#365782"/><rect x="0" y="39" width="3" height="3" fill="#5ba7ae"/><rect x="3" y="39" width="6" height="3" fill="#365782"/><rect x="9" y="39" width="9" height="3" fill="#5ba7ae"/><rect x="18" y="39" width="3" height="3" fill="#365782"/><rect x="21" y="39" width="12" height="3" fill="#9ad8f0"/><rect x="33" y="39" width="9" height="3" fill="#365782"/><rect x="42" y="39" width="3" height="3" fill="#9ad8f0"/><rect x="45" y="39" width="3" height="3" fill="#365782"/><rect x="0" y="42" width="6" height="3" fill="#365782"/><rect x="6" y="42" width="9" height="3" fill="#5ba7ae"/><rect x="15" y="42" width="3" height="3" fill="#365782"/><rect x="18" y="42" width="6" height="3" fill="#9ad8f0"/><rect x="24" y="42" width="6" height="3" fill="#365782"/><rect x="30" y="42" width="6" height="3" fill="#5ba7ae"/><rect x="36" y="42" width="9" height="3" fill="#365782"/><rect x="45" y="42" width="3" height="3" fill="#9ad8f0"/><rect x="0" y="45" width="21" height="3" fill="#9ad8f0"/><rect x="21" y="45" width="9" height="3" fill="#365782"/><rect x="30" y="45" width="3" height="3" fill="#5ba7ae"/><rect x="33" y="45" width="12" height="3" fill="#365782"/><rect x="45" y="45" width="3" height="3" fill="#9ad8f0"/></svg>
<svg class="a" style="left:735px;top:204px" width="48" height="48" shape-rendering="crispEdges"><rect x="0" y="0" width="3" height="3" fill="#6b7b95"/><rect x="3" y="0" width="3" height="3" fill="#365782"/><rect x="6" y="0" width="6" height="3" fill="#6b7b95"/><rect x="12" y="0" width="6" height="3" fill="#72ad2a"/><rect x="18" y="0" width="21" height="3" fill="#365782"/><rect x="39" y="0" width="3" height="3" fill="#6b7b95"/><rect x="42" y="0" width="6" height="3" fill="#72ad2a"/><rect x="0" y="3" width="12" height="3" fill="#6b7b95"/><rect x="12" y="3" width="3" height="3" fill="#365782"/><rect x="15" y="3" width="3" height="3" fill="#72ad2a"/><rect x="18" y="3" width="3" height="3" fill="#365782"/><rect x="21" y="3" width="12" height="3" fill="#6b7b95"/><rect x="33" y="3" width="3" height="3" fill="#365782"/><rect x="36" y="3" width="3" height="3" fill="#6b7b95"/><rect x="39" y="3" width="6" height="3" fill="#72ad2a"/><rect x="45" y="3" width="3" height="3" fill="#365782"/><rect x="0" y="6" width="12" height="3" fill="#365782"/><rect x="12" y="6" width="3" height="3" fill="#6b7b95"/><rect x="15" y="6" width="9" height="3" fill="#72ad2a"/><rect x="24" y="6" width="12" height="3" fill="#6b7b95"/><rect x="36" y="6" width="6" height="3" fill="#72ad2a"/><rect x="42" y="6" width="6" height="3" fill="#365782"/><rect x="0" y="9" width="6" height="3" fill="#365782"/><rect x="6" y="9" width="12" height="3" fill="#6b7b95"/><rect x="18" y="9" width="21" height="3" fill="#72ad2a"/><rect x="39" y="9" width="3" height="3" fill="#365782"/><rect x="42" y="9" width="6" height="3" fill="#6b7b95"/><rect x="0" y="12" width="3" height="3" fill="#6b7b95"/><rect x="3" y="12" width="6" height="3" fill="#365782"/><rect x="9" y="12" width="3" height="3" fill="#6b7b95"/><rect x="12" y="12" width="3" height="3" fill="#365782"/><rect x="15" y="12" width="6" height="3" fill="#72ad2a"/><rect x="21" y="12" width="3" height="3" fill="#365782"/><rect x="24" y="12" width="9" height="3" fill="#6b7b95"/><rect x="33" y="12" width="6" height="3" fill="#72ad2a"/><rect x="39" y="12" width="3" height="3" fill="#365782"/><rect x="42" y="12" width="6" height="3" fill="#6b7b95"/><rect x="0" y="15" width="6" height="3" fill="#6b7b95"/><rect x="6" y="15" width="6" height="3" fill="#365782"/><rect x="12" y="15" width="3" height="3" fill="#72ad2a"/><rect x="15" y="15" width="12" height="3" fill="#365782"/><rect x="27" y="15" width="9" height="3" fill="#6b7b95"/><rect x="36" y="15" width="3" height="3" fill="#365782"/><rect x="39" y="15" width="3" height="3" fill="#72ad2a"/><rect x="42" y="15" width="3" height="3" fill="#365782"/><rect x="45" y="15" width="3" height="3" fill="#6b7b95"/><rect x="0" y="18" width="9" height="3" fill="#6b7b95"/><rect x="9" y="18" width="3" height="3" fill="#72ad2a"/><rect x="12" y="18" width="6" height="3" fill="#365782"/><rect x="18" y="18" width="6" height="3" fill="#6b7b95"/><rect x="24" y="18" width="9" height="3" fill="#365782"/><rect x="33" y="18" width="6" height="3" fill="#6b7b95"/><rect x="39" y="18" width="6" height="3" fill="#72ad2a"/><rect x="45" y="18" width="3" height="3" fill="#365782"/><rect x="0" y="21" width="3" height="3" fill="#365782"/><rect x="3" y="21" width="6" height="3" fill="#6b7b95"/><rect x="9" y="21" width="3" height="3" fill="#72ad2a"/><rect x="12" y="21" width="6" height="3" fill="#365782"/><rect x="18" y="21" width="6" height="3" fill="#6b7b95"/><rect x="24" y="21" width="3" height="3" fill="#365782"/><rect x="27" y="21" width="3" height="3" fill="#6b7b95"/><rect x="30" y="21" width="6" height="3" fill="#365782"/><rect x="36" y="21" width="3" height="3" fill="#72ad2a"/><rect x="39" y="21" width="6" height="3" fill="#365782"/><rect x="45" y="21" width="3" height="3" fill="#72ad2a"/><rect x="0" y="24" width="18" height="3" fill="#72ad2a"/><rect x="18" y="24" width="6" height="3" fill="#365782"/><rect x="24" y="24" width="6" height="3" fill="#6b7b95"/><rect x="30" y="24" width="6" height="3" fill="#72ad2a"/><rect x="36" y="24" width="6" height="3" fill="#365782"/><rect x="42" y="24" width="3" height="3" fill="#6b7b95"/><rect x="45" y="24" width="3" height="3" fill="#365782"/><rect x="0" y="27" width="3" height="3" fill="#72ad2a"/><rect x="3" y="27" width="3" height="3" fill="#6b7b95"/><rect x="6" y="27" width="6" height="3" fill="#365782"/><rect x="12" y="27" width="3" height="3" fill="#6b7b95"/><rect x="15" y="27" width="3" height="3" fill="#365782"/><rect x="18" y="27" width="12" height="3" fill="#72ad2a"/><rect x="30" y="27" width="3" height="3" fill="#365782"/><rect x="33" y="27" width="3" height="3" fill="#6b7b95"/><rect x="36" y="27" width="3" height="3" fill="#365782"/><rect x="39" y="27" width="6" height="3" fill="#6b7b95"/><rect x="45" y="27" width="3" height="3" fill="#365782"/><rect x="0" y="30" width="3" height="3" fill="#6b7b95"/><rect x="3" y="30" width="12" height="3" fill="#365782"/><rect x="15" y="30" width="6" height="3" fill="#6b7b95"/><rect x="21" y="30" width="6" height="3" fill="#72ad2a"/><rect x="27" y="30" width="3" height="3" fill="#365782"/><rect x="30" y="30" width="9" height="3" fill="#6b7b95"/><rect x="39" y="30" width="6" height="3" fill="#365782"/><rect x="45" y="30" width="3" height="3" fill="#72ad2a"/><rect x="0" y="33" width="3" height="3" fill="#6b7b95"/><rect x="3" y="33" width="9" height="3" fill="#365782"/><rect x="12" y="33" width="12" height="3" fill="#6b7b95"/><rect x="24" y="33" width="6" height="3" fill="#72ad2a"/><rect x="30" y="33" width="6" height="3" fill="#6b7b95"/><rect x="36" y="33" width="6" height="3" fill="#365782"/><rect x="42" y="33" width="6" height="3" fill="#72ad2a"/><rect x="0" y="36" width="3" height="3" fill="#365782"/><rect x="3" y="36" width="3" height="3" fill="#6b7b95"/><rect x="6" y="36" width="3" height="3" fill="#365782"/><rect x="9" y="36" width="15" height="3" fill="#6b7b95"/><rect x="24" y="36" width="21" height="3" fill="#72ad2a"/><rect x="45" y="36" width="3" height="3" fill="#365782"/><rect x="0" y="39" width="3" height="3" fill="#6b7b95"/><rect x="3" y="39" width="6" height="3" fill="#365782"/><rect x="9" y="39" width="9" height="3" fill="#6b7b95"/><rect x="18" y="39" width="3" height="3" fill="#365782"/><rect x="21" y="39" width="12" height="3" fill="#72ad2a"/><rect x="33" y="39" width="9" height="3" fill="#365782"/><rect x="42" y="39" width="3" height="3" fill="#72ad2a"/><rect x="45" y="39" width="3" height="3" fill="#365782"/><rect x="0" y="42" width="6" height="3" fill="#365782"/><rect x="6" y="42" width="9" height="3" fill="#6b7b95"/><rect x="15" y="42" width="3" height="3" fill="#365782"/><rect x="18" y="42" width="6" height="3" fill="#72ad2a"/><rect x="24" y="42" width="6" height="3" fill="#365782"/><rect x="30" y="42" width="6" height="3" fill="#6b7b95"/><rect x="36" y="42" width="9" height="3" fill="#365782"/><rect x="45" y="42" width="3" height="3" fill="#72ad2a"/><rect x="0" y="45" width="21" height="3" fill="#72ad2a"/><rect x="21" y="45" width="9" height="3" fill="#365782"/><rect x="30" y="45" width="3" height="3" fill="#6b7b95"/><rect x="33" y="45" width="12" height="3" fill="#365782"/><rect x="45" y="45" width="3" height="3" fill="#72ad2a"/></svg>
<svg class="a" style="left:1484px;top:209px" width="10" height="6"><path d="M1 5 L5 1 L9 5 Z" fill="#6a6a6a"/></svg>
<div class="a" style="left:1485px;top:911px;width:8px;height:18px;background:#6a6a6a;"></div>
<svg class="a" style="left:1484px;top:935px" width="10" height="6"><path d="M1 1 L5 5 L9 1 Z" fill="#6a6a6a"/></svg>
<svg class="a" style="left:693px;top:951px" width="6" height="10"><path d="M5 1 L1 5 L5 9 Z" fill="#6a6a6a"/></svg>
<div class="a" style="left:1444px;top:952px;width:18px;height:8px;background:#6a6a6a;"></div>
<svg class="a" style="left:1467px;top:951px" width="6" height="10"><path d="M1 1 L5 5 L1 9 Z" fill="#6a6a6a"/></svg>
<div class="t" style="left:1317px;top:967.41px;font-size:11.7px;line-height:13.07px;font-weight:normal;color:#fff;">Zoom 300.0 %</div>
<div class="a" style="left:1404px;top:973px;width:88px;height:3px;background:#282828;"></div>
<svg class="a" style="left:1430px;top:968px" width="14" height="14"><circle cx="7" cy="7" r="6" fill="#1e8ac4"/></svg>
<div class="t" style="left:1516px;top:40.63px;font-size:14px;line-height:15.64px;font-weight:bold;color:#fff;">Tag</div>
<div class="a" style="left:1512px;top:59px;width:397px;height:922px;background:#282828;border:1px solid #838383;"></div>
<div class="a" style="left:8px;top:993px;width:106px;height:24px;background:#282828;"></div>
<div class="t" style="left:-139.0px;width:400px;text-align:center;top:1000.10px;font-size:11.6px;line-height:12.96px;font-weight:normal;color:#fff;">Reset Database</div>
<div class="a" style="left:124px;top:993px;width:88px;height:24px;background:#282828;"></div>
<div class="t" style="left:-32.0px;width:400px;text-align:center;top:1000.10px;font-size:11.6px;line-height:12.96px;font-weight:normal;color:#fff;">Reset Cache</div>
<div class="a" style="left:230px;top:993px;width:107px;height:24px;background:#282828;"></div>
<div class="t" style="left:83.5px;width:400px;text-align:center;top:1000.10px;font-size:11.6px;line-height:12.96px;font-weight:normal;color:#fff;">Global Variables</div>
<div class="a" style="left:357px;top:993px;width:108px;height:24px;background:#282828;"></div>
<div class="t" style="left:211.0px;width:400px;text-align:center;top:1000.10px;font-size:11.6px;line-height:12.96px;font-weight:normal;color:#fff;">Global Switches</div>
<div class="a" style="left:475px;top:993px;width:103px;height:24px;background:#282828;"></div>
<div class="t" style="left:326.5px;width:400px;text-align:center;top:1000.10px;font-size:11.6px;line-height:12.96px;font-weight:normal;color:#fff;">Run Test Game</div>
<div class="a" style="left:1673px;top:993px;width:73px;height:24px;background:#282828;"></div>
<div class="t" style="left:1509.5px;width:400px;text-align:center;top:1000.10px;font-size:11.6px;line-height:12.96px;font-weight:normal;color:#fff;">Apply</div>
<div class="a" style="left:1756px;top:993px;width:73px;height:24px;background:#282828;"></div>
<div class="t" style="left:1592.5px;width:400px;text-align:center;top:1000.10px;font-size:11.6px;line-height:12.96px;font-weight:normal;color:#fff;">OK</div>
<div class="a" style="left:1839px;top:993px;width:73px;height:24px;background:#282828;"></div>
<div class="t" style="left:1675.5px;width:400px;text-align:center;top:1000.10px;font-size:11.6px;line-height:12.96px;font-weight:normal;color:#fff;">Cancel</div>
<div class="a" style="left:0px;top:1032px;width:1919px;height:3px;background:#1f1f1f;"></div>
</body></html>
